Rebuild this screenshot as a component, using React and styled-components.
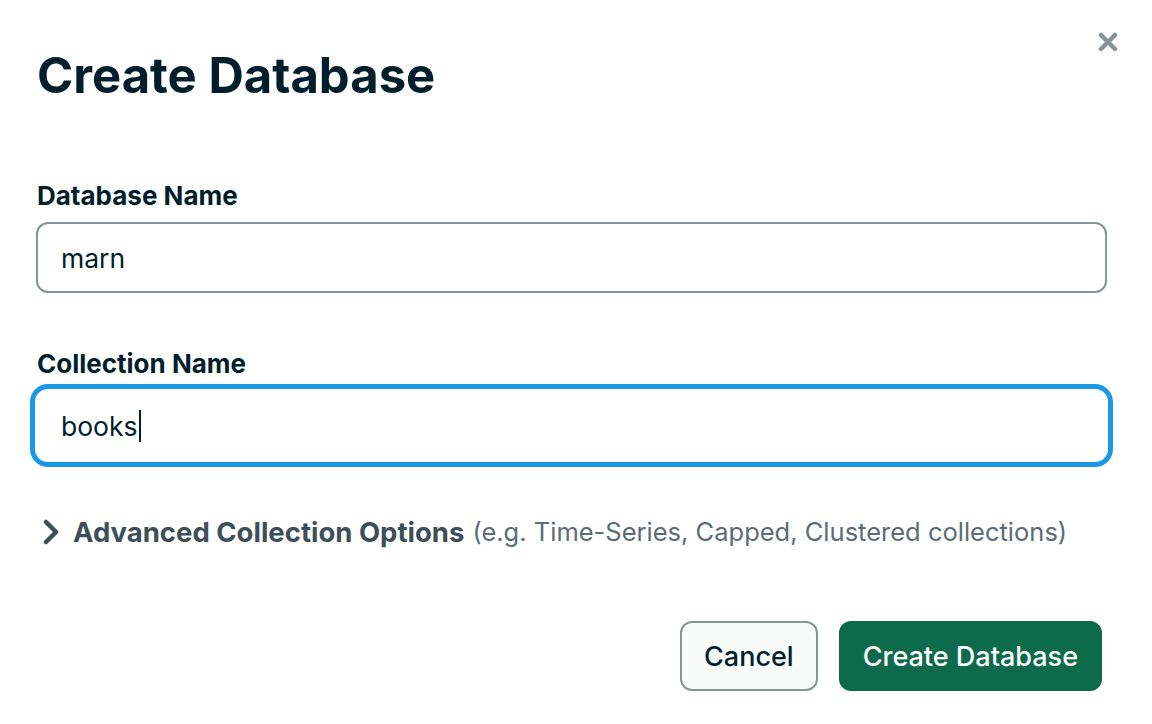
import React from "react";
import styled, { createGlobalStyle } from "styled-components";

const Global = createGlobalStyle`
  html, body { margin: 0; padding: 0; background: #ffffff; }
  body { font-family: Inter, "Noto Sans", sans-serif; color: #001e2b; }
  * { box-sizing: border-box; }
`;

const Dialog = styled.div`
  position: relative;
  width: 1152px;
  height: 724px;
  padding: 48px 45px 0 36px;
  display: flex;
  flex-direction: column;
`;

const CloseButton = styled.button`
  position: absolute;
  top: 30px;
  right: 32px;
  width: 24px;
  height: 24px;
  padding: 0;
  border: none;
  background: transparent;
  display: flex;
  align-items: center;
  justify-content: center;
  cursor: pointer;
`;

const Title = styled.h1`
  margin: 0 0 0 1px;
  font-size: 49px;
  line-height: 56px;
  font-weight: 700;
  color: #001e2b;
`;

const Form = styled.div`
  display: flex;
  flex-direction: column;
  margin-top: 76px;
`;

const Field = styled.div`
  display: flex;
  flex-direction: column;
  margin-bottom: ${(p) => p.$mb || 0}px;
`;

const Label = styled.label`
  font-size: 26px;
  line-height: 32px;
  font-weight: 700;
  color: #001e2b;
  margin: 0 0 10px 1px;
`;

const Input = styled.div`
  height: 71px;
  border: 2px solid ${(p) => (p.$focused ? "#ffffff" : "#889397")};
  box-shadow: ${(p) => (p.$focused ? "0 0 0 1px #ffffff, 0 0 0 6px #1a98e6" : "none")};
  border-radius: 12px;
  display: flex;
  align-items: center;
  padding: 0 23px;
  font-size: 26.5px;
  color: #001e2b;
  background: #fff;
`;

const Caret = styled.span`
  display: inline-block;
  width: 2px;
  height: 32px;
  background: #001e2b;
  margin-left: 1px;
`;

const Advanced = styled.div`
  display: flex;
  align-items: center;
  margin-top: 54px;
  margin-left: 7px;
  gap: 14px;
  line-height: 34px;
`;

const AdvancedTitle = styled.span`
  font-size: 27.5px;
  font-weight: 700;
  color: #3d4f58;
`;

const AdvancedHint = styled.span`
  font-size: 25.5px;
  font-weight: 400;
  color: #5c6c75;
  margin-left: -6px;
`;

const Footer = styled.div`
  display: flex;
  justify-content: flex-end;
  gap: 21px;
  margin-top: 72px;
  margin-right: 5px;
`;

const Button = styled.button`
  height: 70px;
  padding: 0 22px;
  border-radius: 12px;
  border: 2px solid ${(p) => (p.$primary ? "#0d6a4b" : "#889397")};
  background: ${(p) => (p.$primary ? "#0d6a4b" : "#f9fbfa")};
  color: ${(p) => (p.$primary ? "#ffffff" : "#001e2b")};
  font-family: Inter, "Noto Sans", sans-serif;
  font-size: 27px;
  font-weight: 500;
  cursor: pointer;
`;

export default function App() {
  return (
    <>
      <Global />
      <Dialog>
        <CloseButton aria-label="Close">
          <svg width="20" height="20" viewBox="0 0 20 20">
            <path d="M3 3 L17 17 M17 3 L3 17" stroke="#889397" strokeWidth="4.5" strokeLinecap="round" />
          </svg>
        </CloseButton>
        <Title>Create Database</Title>
        <Form>
          <Field $mb={55}>
            <Label>Database Name</Label>
            <Input>marn</Input>
          </Field>
          <Field>
            <Label>Collection Name</Label>
            <Input $focused>
              books<Caret />
            </Input>
          </Field>
        </Form>
        <Advanced>
          <svg width="16" height="26" viewBox="0 0 16 26">
            <path d="M3 3 L13 13 L3 23" fill="none" stroke="#3d4f58" strokeWidth="4.5" strokeLinecap="round" strokeLinejoin="round" />
          </svg>
          <AdvancedTitle>Advanced Collection Options</AdvancedTitle>
          <AdvancedHint>(e.g. Time-Series, Capped, Clustered collections)</AdvancedHint>
        </Advanced>
        <Footer>
          <Button>Cancel</Button>
          <Button $primary>Create Database</Button>
        </Footer>
      </Dialog>
    </>
  );
}
